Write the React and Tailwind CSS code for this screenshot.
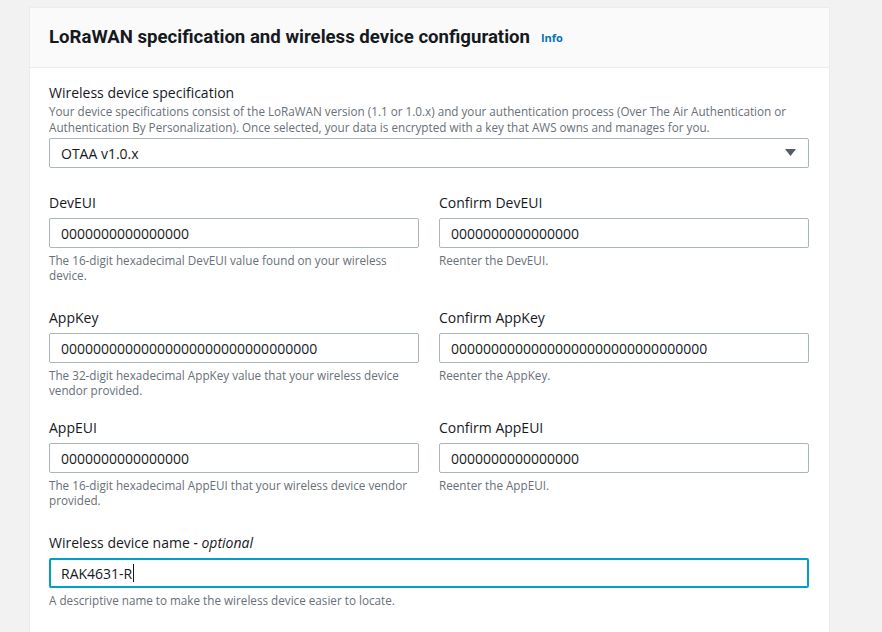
import { useState } from "react";

const font = { fontFamily: '"Open Sans", "Noto Sans", Arial, sans-serif' };

function Field({ label, optional, value, hint, focused, className = "" }) {
  return (
    <div className={className}>
      <div className="text-[14px] leading-[20px] text-[#16191f]">
        {label}
        {optional && <i> - optional</i>}
      </div>
      <div
        className={
          focused
            ? "mt-[5px] flex h-[30px] items-center rounded-[2px] border-2 border-[#00a1c9] px-[10px] text-[14px] text-[#16191f]"
            : "mt-[5px] flex h-[30px] items-center rounded-[2px] border border-[#aab7b8] px-[11px] text-[14px] text-[#16191f]"
        }
      >
        {value}
        {focused && <span className="ml-px h-[18px] w-px bg-[#16191f]" />}
      </div>
      <div className="mt-[5px] text-[11.7px] leading-[15px] text-[#687078]">{hint}</div>
    </div>
  );
}

export default function App() {
  const [zeros] = useState("0000000000000000");
  const longZeros = zeros + zeros;

  return (
    <div className="min-h-[632px] bg-[#f2f2f2] pl-[29px] pt-[7px]" style={font}>
      <div className="w-[801px] border border-[#eaeded] bg-white">
        <div className="flex h-[60px] items-center border-b border-[#eaeded] bg-[#fafafa] pl-[19px] pr-[20px]">
          <h2 className="text-[18.6px] font-bold text-[#16191f]" style={{ fontFamily: "Roboto, Arial, sans-serif" }}>
            LoRaWAN specification and wireless device configuration
          </h2>
          <span className="ml-[11px] mt-[2px] text-[11px] font-bold text-[#0073bb]">Info</span>
        </div>

        <div className="pb-[30px] pl-[19px] pr-[20px] pt-[15px]">
          <div className="text-[14px] leading-[20px] text-[#16191f]">Wireless device specification</div>
          <div className="text-[11.7px] leading-[16px] text-[#687078]">
            Your device specifications consist of the LoRaWAN version (1.1 or 1.0.x) and your authentication process (Over The Air Authentication or
            Authentication By Personalization). Once selected, your data is encrypted with a key that AWS owns and manages for you.
          </div>
          <div className="mt-[3px] flex h-[30px] items-center justify-between rounded-[2px] border border-[#aab7b8] pl-[11px] pr-[12px] text-[14px] text-[#16191f]">
            <span>OTAA v1.0.x</span>
            <svg width="11" height="8" viewBox="0 0 11 8">
              <path d="M0 0 H11 L5.5 7 Z" fill="#545b64" />
            </svg>
          </div>

          <div className="mt-[25px] grid grid-cols-2 gap-x-5">
            <Field label="DevEUI" value={zeros} hint="The 16-digit hexadecimal DevEUI value found on your wireless device." />
            <Field label="Confirm DevEUI" value={zeros} hint="Reenter the DevEUI." />
          </div>

          <div className="mt-[25px] grid grid-cols-2 gap-x-5">
            <Field label="AppKey" value={longZeros} hint="The 32-digit hexadecimal AppKey value that your wireless device vendor provided." />
            <Field label="Confirm AppKey" value={longZeros} hint="Reenter the AppKey." />
          </div>

          <div className="mt-[20px] grid grid-cols-2 gap-x-5">
            <Field label="AppEUI" value={zeros} hint="The 16-digit hexadecimal AppEUI that your wireless device vendor provided." />
            <Field label="Confirm AppEUI" value={zeros} hint="Reenter the AppEUI." />
          </div>

          <Field
            className="mt-[25px]"
            label="Wireless device name"
            optional
            value="RAK4631-R"
            focused
            hint="A descriptive name to make the wireless device easier to locate."
          />
        </div>
      </div>
    </div>
  );
}
